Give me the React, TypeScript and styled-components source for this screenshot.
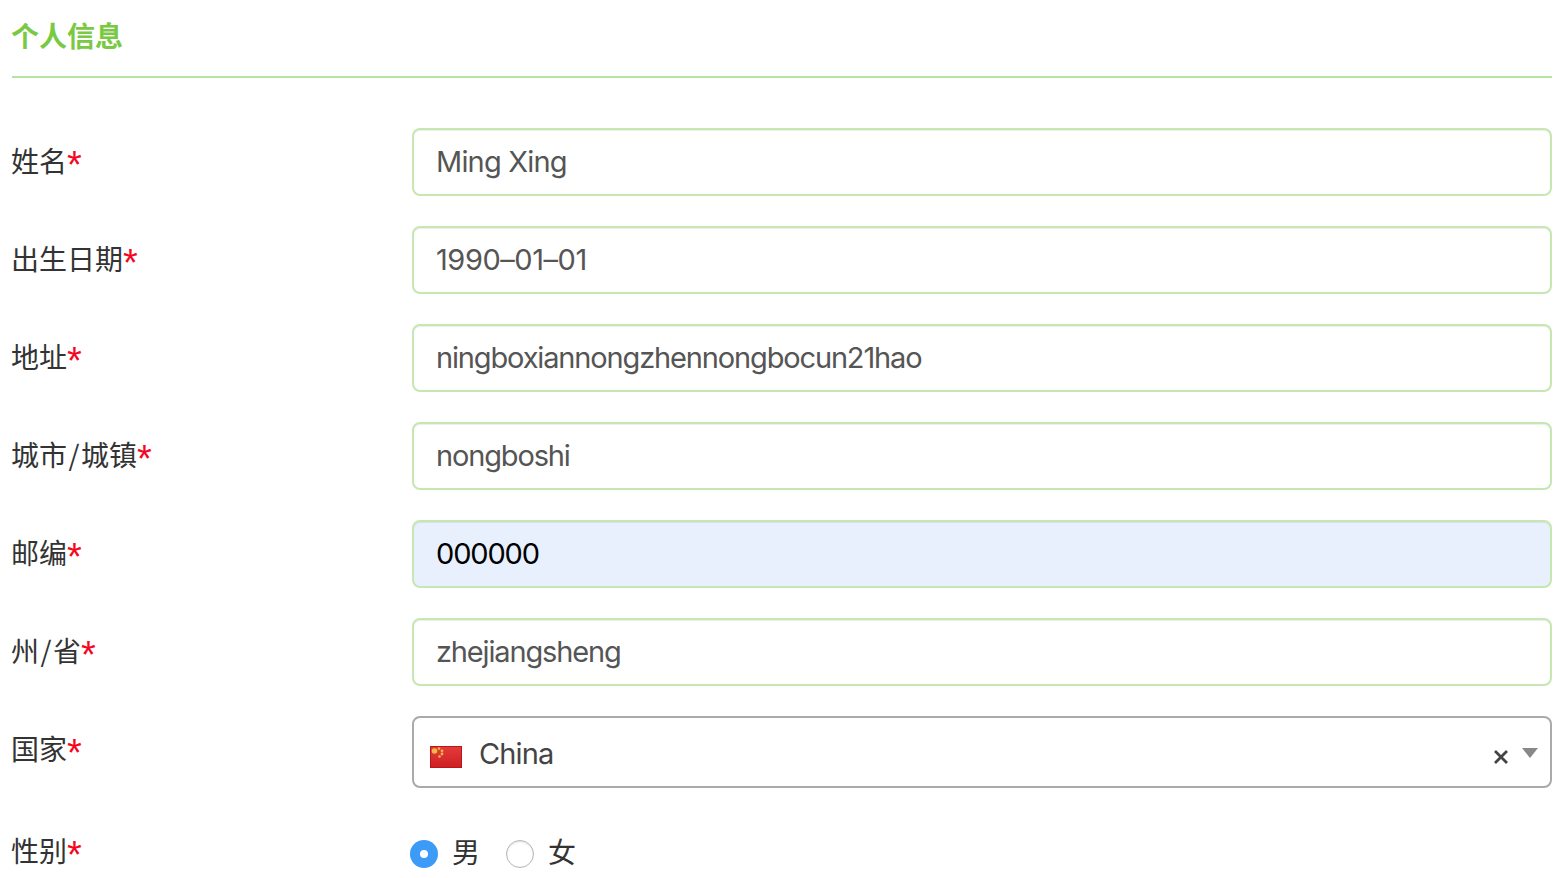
import { FC } from "react";
import styled, { createGlobalStyle } from "styled-components";

const GlobalStyle = createGlobalStyle`
    html,body{
        margin:0;
        padding:0;
        background:#fff;
        overflow:hidden;
    }
    body{
        font-family:"Inter","Noto Sans CJK SC",sans-serif;
    }
`

const Page = styled.div`
    height:878px;
    padding:0 6px 0 12px;
    box-sizing:border-box;
    overflow:hidden;
`

const SectionTitle = styled.h2`
    margin:0;
    height:78px;
    box-sizing:border-box;
    padding-top:16px;
    text-indent:-1px;
    font-family:"Noto Sans CJK SC",sans-serif;
    font-size:28px;
    line-height:38px;
    font-weight:700;
    color:#7ac943;
    border-bottom:2px solid #b9e29f;
`

const Form = styled.div`
    padding-top:50px;
    display:flex;
    flex-direction:column;
    gap:30px;
`

const Row = styled.div`
    display:flex;
`

const Label = styled.label`
    width:400px;
    flex:none;
    padding-top:12px;
    box-sizing:border-box;
    text-indent:-1px;
    font-family:"Noto Sans CJK SC",sans-serif;
    font-size:28px;
    line-height:40px;
    color:#333;
`

const Slash = styled.span`
    margin:0 1.5px;
`

const Star = styled.span`
    font-family:"Liberation Sans",sans-serif;
    font-size:38px;
    line-height:0;
    vertical-align:-6px;
    color:#f5071f;
`

const TextInput = styled.input<{ $filled?: boolean; $spacing?: number }>`
    flex:1;
    min-width:0;
    height:68px;
    box-sizing:border-box;
    padding:0 23px 2px;
    border:2px solid #c6e6b2;
    border-radius:8px;
    outline:none;
    font-family:"Inter",sans-serif;
    font-size:29px;
    letter-spacing:${(props)=>props.$spacing ?? -1.15}px;
    color:${(props)=>props.$filled ? "#000" : "#555"};
    background:${(props)=>props.$filled ? "#e8f0fe" : "#fff"};
    box-shadow:inset 0 1px 1px rgba(0,0,0,0.075);
    margin-left:0;
    text-indent:-1px;
`

const Select = styled.div`
    flex:1;
    height:72px;
    box-sizing:border-box;
    display:flex;
    align-items:center;
    padding:2px 12px 0 16px;
    border:2px solid #aaa;
    border-radius:8px;
`

const Flag = styled.svg`
    width:32px;
    height:22px;
    flex:none;
    margin-top:8px;
`

const SelectValue = styled.span`
    flex:1;
    margin-left:17px;
    font-size:29px;
    letter-spacing:-0.9px;
    color:#444;
`

const Clear = styled.svg`
    width:16px;
    height:16px;
    margin-right:13px;
    margin-top:8px;
`

const Arrow = styled.span`
    width:0;
    height:0;
    margin-bottom:1px;
    border-left:8px solid transparent;
    border-right:8px solid transparent;
    border-top:10px solid #888;
`

const RadioRow = styled.div`
    display:flex;
    align-items:center;
    height:44px;
    margin-left:-2px;
    margin-top:14px;
`

const Radio = styled.span<{ $checked?: boolean }>`
    width:28px;
    height:28px;
    flex:none;
    box-sizing:border-box;
    border-radius:50%;
    display:flex;
    align-items:center;
    justify-content:center;
    background:${(props)=>props.$checked ? "#3d9bf8" : "#fff"};
    border:${(props)=>props.$checked ? "none" : "1px solid #b5b5b5"};
    box-shadow:${(props)=>props.$checked ? "none" : "inset 0 1px 2px rgba(0,0,0,0.12)"};
    &::after{
        content:"";
        display:${(props)=>props.$checked ? "block" : "none"};
        width:8px;
        height:8px;
        border-radius:50%;
        background:#fff;
    }
`

const RadioText = styled.span`
    margin:0 26px 6px 14px;
    font-family:"Noto Sans CJK SC",sans-serif;
    font-size:28px;
    line-height:40px;
    color:#333;
`

const fields = [
    { label:"姓名", value:"Ming Xing", spacing:-0.8 },
    { label:"出生日期", value:"1990–01–01", spacing:-0.45 },
    { label:"地址", value:"ningboxiannongzhennongbocun21hao" },
    { label:"城市/城镇", value:"nongboshi" },
    { label:"邮编", value:"000000", filled:true },
    { label:"州/省", value:"zhejiangsheng" },
];

const FieldLabel:FC<{ text:string }> = ({text})=>{
    const parts = text.split("/");
    return (
        <Label>
            {parts[0]}
            {parts[1] && <><Slash>/</Slash>{parts[1]}</>}
            <Star>*</Star>
        </Label>
    )
}

const App:FC = ()=>{
    return (
        <Page>
            <GlobalStyle />
            <SectionTitle>个人信息</SectionTitle>
            <Form>
                {fields.map((f)=>(
                    <Row key={f.label}>
                        <FieldLabel text={f.label} />
                        <TextInput readOnly value={f.value} $filled={f.filled} $spacing={f.spacing} />
                    </Row>
                ))}
                <Row>
                    <FieldLabel text="国家" />
                    <Select>
                        <Flag viewBox="0 0 32 22">
                            <defs>
                                <linearGradient id="flagRed" x1="0" y1="0" x2="0" y2="1">
                                    <stop offset="0" stopColor="#e23b3b" />
                                    <stop offset="1" stopColor="#cf1f22" />
                                </linearGradient>
                            </defs>
                            <rect width="32" height="22" fill="#b9151b" />
                            <rect x="1" y="1" width="30" height="20" fill="url(#flagRed)" />
                            <circle cx="4.5" cy="5" r="2.8" fill="#efb93f" />
                            <circle cx="9" cy="2.6" r="1.3" fill="#efb93f" />
                            <circle cx="12" cy="4.8" r="1.4" fill="#efb93f" />
                            <circle cx="12" cy="8" r="1.4" fill="#efb93f" />
                            <circle cx="9.5" cy="10.5" r="1.3" fill="#efb93f" />
                        </Flag>
                        <SelectValue>China</SelectValue>
                        <Clear viewBox="0 0 16 16">
                            <path d="M2 2L14 14M14 2L2 14" stroke="#444" strokeWidth="2.8" />
                        </Clear>
                        <Arrow />
                    </Select>
                </Row>
                <Row>
                    <FieldLabel text="性别" />
                    <RadioRow>
                        <Radio $checked />
                        <RadioText>男</RadioText>
                        <Radio />
                        <RadioText>女</RadioText>
                    </RadioRow>
                </Row>
            </Form>
        </Page>
    )
}
export default App;
